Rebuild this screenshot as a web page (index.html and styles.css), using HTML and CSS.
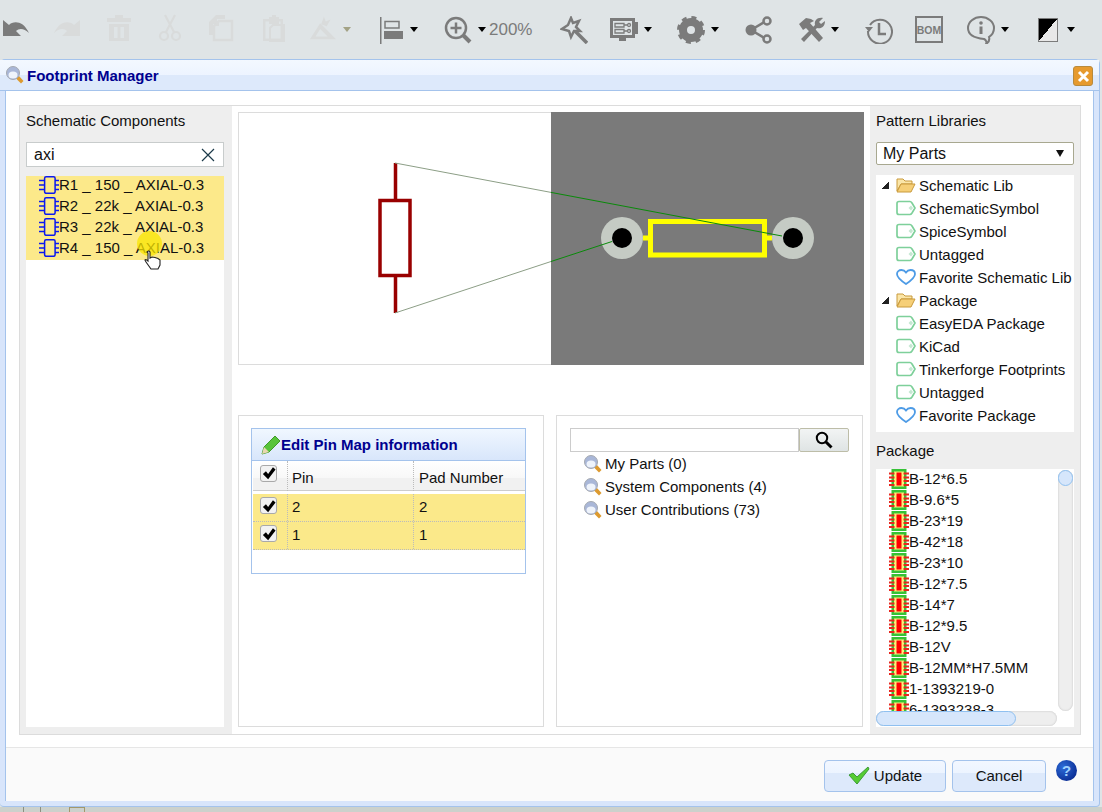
FILE: index.html
```html
<!DOCTYPE html>
<html lang="en">
<head>
    <meta charset="UTF-8">
    <title>Footprint Manager</title>
    <link rel="stylesheet" href="styles.css">
</head>
<body>
    <svg class="defs" width="0" height="0">
        <symbol id="i-undo" viewBox="0 0 28 28"><path d="M1 4L7 9C11 5 21 4 27 17C22 12 17 12 14 15L19 20H1Z"/></symbol>
        <symbol id="i-redo" viewBox="0 0 28 28"><path d="M27 4L21 9C17 5 7 4 1 17C6 12 11 12 14 15L9 20H27Z"/></symbol>
        <symbol id="i-trash" viewBox="0 0 24 28"><path fill-rule="evenodd" d="M8 1H16V4H24V8H0V4H8ZM2 10H22V27H2ZM7 13V24H10.500V13ZM13.500 13V24H17V13Z"/></symbol>
        <symbol id="i-scissors" viewBox="0 0 24 28"><g fill="none" stroke="currentColor" stroke-width="2.200"><circle cx="6" cy="22" r="4"/><circle cx="18" cy="22" r="4"/><path d="M8 18L17 1M16 18L7 1"/></g></symbol>
        <symbol id="i-copy" viewBox="0 0 26 28"><path d="M8 1H17V5H9V10H5V21H1V8Z"/><path fill="none" stroke="currentColor" stroke-width="2.500" d="M11 7H24V26H6V12Z"/><path d="M11 7V12H6Z"/></symbol>
        <symbol id="i-paste" viewBox="0 0 24 28"><path fill-rule="evenodd" d="M8 3H11V1H15V3H18V5H22V27H2V5H8ZM4.500 7.500V24.500H19.500V7.500H18V10H8V7.500Z"/><path fill="none" stroke="currentColor" stroke-width="2" d="M23 11H12L9 14V27H23Z"/></symbol>
        <symbol id="i-tri" viewBox="0 0 30 28"><path fill-rule="evenodd" d="M12 9L29 26H1ZM12 15L7 23H20Z"/><path d="M13 10L16 2L18 7L23 5L19 12Z"/></symbol>
        <symbol id="i-align" viewBox="0 0 28 28"><path d="M1 1H2.500V28H1Z"/><path fill="none" stroke="currentColor" stroke-width="1.500" d="M6 5.500H20V12H6Z"/><path d="M5 15H24V23H5Z"/></symbol>
        <symbol id="i-zoom" viewBox="0 0 28 28"><g fill="none" stroke="currentColor"><circle cx="12" cy="12" r="10" stroke-width="2.500"/><path stroke-width="2.500" d="M12 6.500V17.500M6.500 12H17.500"/><path stroke-width="4" d="M19 19L26 26"/></g></symbol>
        <symbol id="i-wand" viewBox="0 0 28 28"><path fill="none" stroke="currentColor" stroke-width="2.500" d="M11 2L13 7L19 5L16 11L20 15L14 15L11 21L9 15L2 13L8 9Z"/><path fill="none" stroke="currentColor" stroke-width="3.500" d="M15 15L27 27"/></symbol>
        <symbol id="i-board" viewBox="0 0 28 28"><path fill-rule="evenodd" d="M0 2H25V6H28V18H25V22H16V25H9V22H0ZM3 5V19H22V5Z"/><g fill="none" stroke="currentColor" stroke-width="1.300"><path d="M5 7.500H14V11H5ZM5 13.500H14V17H5Z"/><circle cx="19" cy="9" r="1.500"/><circle cx="19" cy="15" r="1.500"/><path d="M14 9H17M14 15H17"/></g></symbol>
        <symbol id="i-gear" viewBox="0 0 28 28"><circle cx="14" cy="14" r="8" fill="none" stroke="currentColor" stroke-width="8"/><circle cx="14" cy="14" r="12.500" fill="none" stroke="currentColor" stroke-width="3" stroke-dasharray="5 4.820"/></symbol>
        <symbol id="i-share" viewBox="0 0 28 28"><g fill="none" stroke="currentColor" stroke-width="2.500"><path d="M6 14L21 5M6 14L21 23"/><circle cx="22" cy="5" r="3.500" fill="#dfe4e6"/><circle cx="22" cy="23" r="3.500" fill="#dfe4e6"/></g><circle cx="6" cy="14" r="5.500"/></symbol>
        <symbol id="i-tools" viewBox="0 0 28 28"><path d="M2 8L9 2L14 3L17 5L13 7L26 22L22 26L9 12L6 14Z"/><path d="M4 23L18 9C17 5 20 1 26 2L22 6L24 8L28 5C28 11 24 13 20 12L7 26Z"/></symbol>
        <symbol id="i-history" viewBox="0 0 28 28"><g fill="none" stroke="currentColor" stroke-width="2"><path d="M5 9A12 12 0 1 1 3 15"/><path stroke-width="2.500" d="M14 7V18H21"/></g><path d="M0 11H8L4 16Z"/></symbol>
        <symbol id="i-info" viewBox="0 0 28 28"><path fill="none" stroke="currentColor" stroke-width="2" d="M14 1C7 1 1 6 1 12C1 18 7 22 17 23C19 24 20 26 19 28C22 26 23 24 22 21C25 19 27 16 27 12C27 6 21 1 14 1Z"/><circle cx="14" cy="7" r="1.800"/><path d="M12.500 10.500H15.500V18H12.500Z"/></symbol>
        <symbol id="i-lens" viewBox="0 0 18 18"><path d="M11 11L13 10L17.500 15L15 17.500L10 12.500Z" fill="#dd9a2f"/><circle cx="7" cy="7" r="6.500" fill="#a9b7d8" stroke="#a5a9b0"/><ellipse cx="7" cy="9" rx="4.500" ry="3.500" fill="#eef3fb"/></symbol>
        <symbol id="i-sch" viewBox="0 0 20 18"><g fill="none" stroke="#0b18f0" stroke-width="1.500"><rect x="5.600" y="0.800" width="10.500" height="16.500" rx="1.500"/><path d="M0 4.500H5.500M0 9H5.500M0 13.500H5.500M16 4.500H20M16 9H20M16 13.500H20"/></g></symbol>
        <symbol id="i-folder" viewBox="0 0 20 16"><path d="M1 14V2H7L9 4H16V7H5L1 14Z" fill="#fbe6a8" stroke="#c99a3c"/><path d="M1 15L5 7H19L15 15Z" fill="#f6cf77" stroke="#c99a3c"/></symbol>
        <symbol id="i-tag" viewBox="0 0 20 16"><path d="M3 1.500H14Q15 1.500 16 3L19 8L16 13Q15 14.500 14 14.500H3Q1 14.500 1 12.500V3.500Q1 1.500 3 1.500Z" fill="#fff" stroke="#7ed09a" stroke-width="1.700"/><path d="M12.500 8L15 5.500L17 8L15 10.500Z" fill="#c5e8d2"/></symbol>
        <symbol id="i-heart" viewBox="0 0 20 16"><path d="M10 15C4 11 1 8.500 1 5C1 2.500 3 1 5.500 1C7.500 1 9 2 10 3.500C11 2 12.500 1 14.500 1C17 1 19 2.500 19 5C19 8.500 16 11 10 15Z" fill="#fff" stroke="#4d9be6" stroke-width="1.800"/></symbol>
        <symbol id="i-pkg" viewBox="0 0 20 20"><rect x="2.500" y="0" width="15" height="20" fill="#36c236"/><rect x="5" y="2.500" width="10" height="15" fill="#fdf07a"/><rect x="7.500" y="3.500" width="5" height="13" fill="#f00"/><path d="M0 3.500H5.500V5.500H0ZM0 7.500H5.500V9.500H0ZM0 11H5.500V13H0ZM0 15H5.500V17H0ZM14.500 3.500H20V5.500H14.500ZM14.500 7.500H20V9.500H14.500ZM14.500 11H20V13H14.500ZM14.500 15H20V17H14.500Z" fill="#e8261c"/></symbol>
        <symbol id="i-check" viewBox="0 0 16 16"><path d="M1 9L4.500 6L7 9L12.500 1.500L15.500 4L7 15Z"/></symbol>
    </svg>

    <div class="toolbar">
        <div class="tool"><svg class="ic"><use href="#i-undo"/></svg></div>
        <div class="tool faint"><svg class="ic"><use href="#i-redo"/></svg></div>
        <div class="tool faint up"><svg class="ic"><use href="#i-trash"/></svg></div>
        <div class="tool faint up"><svg class="ic"><use href="#i-scissors"/></svg></div>
        <div class="tool faint up"><svg class="ic"><use href="#i-copy"/></svg></div>
        <div class="tool faint up"><svg class="ic"><use href="#i-paste"/></svg></div>
        <div class="tool faint up"><svg class="ic"><use href="#i-tri"/></svg><span class="caret caret-off"></span></div>
        <div class="tool tool-align"><svg class="ic"><use href="#i-align"/></svg><span class="caret"></span></div>
        <div class="tool"><svg class="ic"><use href="#i-zoom"/></svg><span class="caret"></span><span class="zoom-val">200%</span></div>
        <div class="tool"><svg class="ic"><use href="#i-wand"/></svg></div>
        <div class="tool"><svg class="ic"><use href="#i-board"/></svg><span class="caret"></span></div>
        <div class="tool"><svg class="ic"><use href="#i-gear"/></svg><span class="caret"></span></div>
        <div class="tool"><svg class="ic"><use href="#i-share"/></svg></div>
        <div class="tool"><svg class="ic"><use href="#i-tools"/></svg><span class="caret"></span></div>
        <div class="tool"><svg class="ic"><use href="#i-history"/></svg></div>
        <div class="tool"><span class="bom">BOM</span></div>
        <div class="tool"><svg class="ic"><use href="#i-info"/></svg><span class="caret"></span></div>
        <div class="tool"><span class="contrast"></span><span class="caret"></span></div>
    </div>

    <div class="dialog">
        <div class="dialog-title">
            <svg class="lens"><use href="#i-lens"/></svg>
            <span>Footprint Manager</span>
            <span class="close">
                <svg width="13" height="13" viewBox="0 0 13 13"><path d="M2 2L11 11M11 2L2 11" stroke="#fff" stroke-width="3"/></svg>
            </span>
        </div>
        <div class="dialog-body">
            <div class="panes">
                <div class="side side-left">
                    <div class="side-title">Schematic Components</div>
                    <div class="search-box">
                        <span>axi</span>
                        <svg width="14" height="14" viewBox="0 0 14 14"><path d="M1 1L13 13M13 1L1 13" stroke="#1c3a4a" stroke-width="1.200"/></svg>
                    </div>
                    <div class="comp-list">
                        <div class="comp-sel">
                            <div class="comp"><svg class="sch"><use href="#i-sch"/></svg>R1 _ 150 _ AXIAL-0.3</div>
                            <div class="comp"><svg class="sch"><use href="#i-sch"/></svg>R2 _ 22k _ AXIAL-0.3</div>
                            <div class="comp"><svg class="sch"><use href="#i-sch"/></svg>R3 _ 22k _ AXIAL-0.3</div>
                            <div class="comp"><svg class="sch"><use href="#i-sch"/></svg>R4 _ 150 _ AXIAL-0.3</div>
                        </div>
                    </div>
                </div>

                <div class="center">
                    <div class="preview">
                        <svg class="preview-art" width="626" height="253" viewBox="238 112 626 253">
                            <rect x="551" y="112" width="313" height="253" fill="#7a7a7a"/>
                            <g fill="none" stroke="#990000">
                                <rect x="380" y="200.500" width="30" height="75" stroke-width="3.500"/>
                                <path d="M395.500 163V200M395.500 276V313" stroke-width="3.500"/>
                            </g>
                            <g fill="#c5cbc4">
                                <circle cx="622" cy="238" r="21"/>
                                <circle cx="793" cy="238" r="21"/>
                            </g>
                            <circle cx="622" cy="238" r="10"/>
                            <circle cx="793" cy="238" r="10"/>
                            <path d="M650.500 221.500H764.500V255H650.500ZM643 238H650M765 238H772" fill="none" stroke="#ffff00" stroke-width="5"/>
                            <path d="M395 163L551 192.400M395 313L551 261.500" stroke="#8c9e86"/>
                            <path d="M551 192.400L782 236M551 261.500L612 241.500" stroke="#0a8a0a"/>
                        </svg>
                    </div>
                    <div class="lower">
                        <div class="lower-box">
                            <div class="pin-grid">
                                <div class="pin-title">
                                    <svg width="20" height="20" viewBox="0 0 20 20"><path d="M1 19L3 12L14 1L19 6L8 17Z" fill="#58c43a" stroke="#3f9a2a"/><path d="M1 19L3 12L8 17Z" fill="#e8d8b0"/></svg>
                                    <span>Edit Pin Map information</span>
                                </div>
                                <div class="pin-row pin-head">
                                    <div class="cell-check"><span class="check"><svg><use href="#i-check"/></svg></span></div>
                                    <div class="cell-pin">Pin</div>
                                    <div class="cell-pad">Pad Number</div>
                                </div>
                                <div class="pin-row pin-sel">
                                    <div class="cell-check"><span class="check"><svg><use href="#i-check"/></svg></span></div>
                                    <div class="cell-pin">2</div>
                                    <div class="cell-pad">2</div>
                                </div>
                                <div class="pin-row pin-sel">
                                    <div class="cell-check"><span class="check"><svg><use href="#i-check"/></svg></span></div>
                                    <div class="cell-pin">1</div>
                                    <div class="cell-pad">1</div>
                                </div>
                            </div>
                        </div>
                        <div class="lower-box lower-right">
                            <div class="find">
                                <div class="find-input"></div>
                                <div class="find-btn">
                                    <svg width="18" height="18" viewBox="0 0 18 18"><circle cx="7" cy="7" r="5.200" fill="none" stroke="#000" stroke-width="2"/><path d="M11 11L16.500 16.500" stroke="#000" stroke-width="3"/></svg>
                                </div>
                            </div>
                            <div class="src"><svg class="lens"><use href="#i-lens"/></svg>My Parts (0)</div>
                            <div class="src"><svg class="lens"><use href="#i-lens"/></svg>System Components (4)</div>
                            <div class="src"><svg class="lens"><use href="#i-lens"/></svg>User Contributions (73)</div>
                        </div>
                    </div>
                </div>

                <div class="side side-right">
                    <div class="side-title">Pattern Libraries</div>
                    <div class="select"><span>My Parts</span><span class="select-arrow"></span></div>
                    <div class="tree">
                        <div class="node"><span class="twist"></span><svg class="nic"><use href="#i-folder"/></svg>Schematic Lib</div>
                        <div class="node leaf"><svg class="nic"><use href="#i-tag"/></svg>SchematicSymbol</div>
                        <div class="node leaf"><svg class="nic"><use href="#i-tag"/></svg>SpiceSymbol</div>
                        <div class="node leaf"><svg class="nic"><use href="#i-tag"/></svg>Untagged</div>
                        <div class="node leaf"><svg class="nic"><use href="#i-heart"/></svg>Favorite Schematic Lib</div>
                        <div class="node"><span class="twist"></span><svg class="nic"><use href="#i-folder"/></svg>Package</div>
                        <div class="node leaf"><svg class="nic"><use href="#i-tag"/></svg>EasyEDA Package</div>
                        <div class="node leaf"><svg class="nic"><use href="#i-tag"/></svg>KiCad</div>
                        <div class="node leaf"><svg class="nic"><use href="#i-tag"/></svg>Tinkerforge Footprints</div>
                        <div class="node leaf"><svg class="nic"><use href="#i-tag"/></svg>Untagged</div>
                        <div class="node leaf"><svg class="nic"><use href="#i-heart"/></svg>Favorite Package</div>
                    </div>
                    <div class="side-title side-title-pkg">Package</div>
                    <div class="pkg-box">
                        <div class="pkg-list">
                            <div class="pkg"><svg class="pkg-ic"><use href="#i-pkg"/></svg>B-12*6.5</div>
                            <div class="pkg"><svg class="pkg-ic"><use href="#i-pkg"/></svg>B-9.6*5</div>
                            <div class="pkg"><svg class="pkg-ic"><use href="#i-pkg"/></svg>B-23*19</div>
                            <div class="pkg"><svg class="pkg-ic"><use href="#i-pkg"/></svg>B-42*18</div>
                            <div class="pkg"><svg class="pkg-ic"><use href="#i-pkg"/></svg>B-23*10</div>
                            <div class="pkg"><svg class="pkg-ic"><use href="#i-pkg"/></svg>B-12*7.5</div>
                            <div class="pkg"><svg class="pkg-ic"><use href="#i-pkg"/></svg>B-14*7</div>
                            <div class="pkg"><svg class="pkg-ic"><use href="#i-pkg"/></svg>B-12*9.5</div>
                            <div class="pkg"><svg class="pkg-ic"><use href="#i-pkg"/></svg>B-12V</div>
                            <div class="pkg"><svg class="pkg-ic"><use href="#i-pkg"/></svg>B-12MM*H7.5MM</div>
                            <div class="pkg"><svg class="pkg-ic"><use href="#i-pkg"/></svg>1-1393219-0</div>
                            <div class="pkg"><svg class="pkg-ic"><use href="#i-pkg"/></svg>6-1393238-3</div>
                        </div>
                        <div class="vbar"><span class="vthumb"></span></div>
                        <div class="hbar"><span class="hthumb"></span></div>
                    </div>
                </div>
            </div>
            <div class="footer">
                <div class="btn btn-update">
                    <svg width="22" height="20" viewBox="0 0 22 20"><path d="M1 10L5 8L9 12L20 2L21 4L9 19Z" fill="#55cc33" stroke="#3d9a38"/></svg>
                    Update
                </div>
                <div class="btn btn-cancel">Cancel</div>
                <span class="help">?</span>
            </div>
        </div>
    </div>
    <div class="strip"><span class="strip-tick"></span><span class="strip-tick"></span><span class="strip-tab"></span></div>

    <div class="pointer">
        <svg width="20" height="24" viewBox="0 0 20 24"><path d="M4 6Q6 4 7 6V12L9 11L12 11.500L15 12.500L17 14V19L15 23H8L3 16L2 14Q3 13 5 15V7Z" fill="#fff" stroke="#222" stroke-width="1.100"/></svg>
    </div>
</body>
</html>
```

FILE: styles.css
```css
* {
    box-sizing: border-box;
}

body {
    margin: 0;
    width: 1102px;
    height: 812px;
    overflow: hidden;
    position: relative;
    background-color: #dfe4e6;
    font-family: "Liberation Sans", Arial, sans-serif;
    font-size: 15px;
    color: #111;
}

.defs {
    position: absolute;
}

.toolbar {
    height: 59px;
    padding-left: 2px;
    display: grid;
    grid-template-columns: 51px 52px 51px 51px 52px 50px 70px 65px 116px 50px 67px 68px 52px 68px 50px 52px 71px 60px;
    align-items: center;
    color: #7b7b7b;
}

.tool {
    display: flex;
    align-items: center;
    gap: 6px;
    height: 28px;
}

.ic {
    width: 28px;
    height: 28px;
    fill: currentColor;
}

.faint {
    color: #d9dbdb;
}

.up .ic {
    margin-top: -4px;
}

.caret {
    width: 0;
    height: 0;
    border-left: 4.500px solid transparent;
    border-right: 4.500px solid transparent;
    border-top: 5px solid #000;
}

.caret-off {
    border-top-color: #a3a285;
}

.tool-align .caret {
    margin-left: -3px;
}

.zoom-val {
    margin-left: -3px;
    font-size: 17px;
    color: #7b7b7b;
}

.bom {
    width: 28px;
    height: 27px;
    border: 2px solid #7b7b7b;
    display: flex;
    align-items: center;
    justify-content: center;
    font-size: 10.500px;
    font-weight: bold;
}

.contrast {
    width: 20px;
    height: 24px;
    margin-right: 3px;
    border: 1px solid #7b7b7b;
    background: linear-gradient(to bottom right, #000 50%, #e8e8e8 50%);
}

.dialog {
    width: 1100px;
    height: 748px;
    padding: 0 5px 6px 5px;
    border: 1px solid #a4c3ec;
    border-left-width: 0;
    border-radius: 5px 5px 4px 4px;
    background: #d8e5fb;
}

.dialog-title {
    height: 31px;
    position: relative;
    display: flex;
    align-items: center;
    gap: 3px;
    margin: 0 -5px 0 -5px;
    padding-left: 6px;
    background: linear-gradient(#f3f8ff 0, #edf4ff 50%, #dde9fb 50%, #dde9fb 100%);
    border-bottom: 1px solid #a4c3ec;
    font-weight: bold;
    color: #00008f;
}

.lens {
    width: 18px;
    height: 18px;
    flex: none;
}

.close {
    position: absolute;
    right: 6px;
    top: 6px;
    width: 20px;
    height: 20px;
    border: 1px solid #b88a3c;
    border-radius: 3px;
    background: #e69a2e;
    display: flex;
    align-items: center;
    justify-content: center;
}

.dialog-body {
    height: 710px;
    padding: 14px 12px 0 13px;
    background-color: #fff;
    border-left: 1px solid #a4c3ec;
    border-right: 1px solid #a4c3ec;
    border-bottom: 1px solid #a4c3ec;
}

.panes {
    height: 630px;
    display: flex;
    border: 1px solid #dcdcdc;
    background-color: #eee;
}

.side {
    flex: none;
    padding-top: 6px;
    padding-left: 6px;
}

.side-left {
    width: 212px;
    padding-right: 8px;
}

.side-right {
    width: 210px;
    padding-right: 6px;
}

.side-title {
    height: 18px;
    line-height: 18px;
}

.search-box {
    height: 25px;
    margin-top: 12px;
    padding: 0 8px 0 7px;
    display: flex;
    align-items: center;
    justify-content: space-between;
    border: 1px solid #c8cccc;
    background-color: #fff;
    font-size: 16px;
}

.comp-list {
    height: 551px;
    margin-top: 9px;
    background-color: #fff;
}

.comp-sel {
    background-color: #fce98a;
}

.comp {
    height: 21px;
    padding: 0 0 5px 13px;
    display: flex;
    align-items: center;
}

.sch {
    width: 20px;
    height: 18px;
    flex: none;
    margin-top: 2px;
}

.center {
    flex: none;
    width: 638px;
    padding: 6px;
    background-color: #fff;
}

.preview {
    height: 253px;
    border: 1px solid #dcdcdc;
}

.preview-art {
    display: block;
    margin: -1px;
}

.lower {
    margin-top: 50px;
    height: 312px;
    display: flex;
    gap: 12px;
}

.lower-box {
    width: 306px;
    border: 1px solid #dcdcdc;
    padding: 12px;
}

.lower-right {
    width: 307px;
    padding: 12px 13px;
}

.pin-grid {
    width: 275px;
    height: 146px;
    border: 1px solid #a4c3ec;
}

.pin-title {
    height: 32px;
    padding-left: 9px;
    display: flex;
    align-items: center;
    gap: 0;
    background: linear-gradient(#f0f7ff, #d8e6fb);
    border-bottom: 1px solid #a4c3ec;
    font-weight: bold;
    color: #00008f;
}

.pin-row {
    display: grid;
    grid-template-columns: 35px 126px 1fr;
    height: 28px;
    margin-left: 1px;
    border-bottom: 1px dotted #bbb;
}

.pin-row > div {
    display: flex;
    align-items: center;
    padding-left: 5px;
    border-right: 1px dotted #bbb;
}

.pin-row > .cell-pin {
    padding-left: 4px;
}

.pin-row > .cell-check {
    padding-left: 7px;
}

.pin-row > .cell-pad {
    border-right: none;
}

.pin-sel > div {
    padding-bottom: 2px;
}

.pin-sel .check {
    margin-top: -2px;
}

.pin-head {
    height: 33px;
    border-bottom: 3px solid #fff;
    box-shadow: inset 0 -1px 0 #ccc;
    background: linear-gradient(#fff 0, #f8f8f8 55%, #f1f1f1 55%, #f1f1f1 100%);
}

.pin-head > div {
    padding-top: 3px;
}

.pin-head .check {
    margin-top: -9px;
}

.pin-sel {
    background-color: #fbe98a;
}

.check {
    width: 17px;
    height: 17px;
    display: flex;
    align-items: center;
    justify-content: center;
    border: 1px solid #a9a9a9;
    border-radius: 3px;
    background-color: #f2f2f2;
}

.check svg {
    width: 14px;
    height: 14px;
}

.find {
    display: flex;
    height: 24px;
}

.find-input {
    width: 229px;
    border: 1px solid #ccc;
}

.find-btn {
    width: 50px;
    display: flex;
    align-items: center;
    justify-content: center;
    border: 1px solid #bdbda8;
    border-radius: 2px;
    background: linear-gradient(#f2f4f4, #dfe4e4);
}

.src {
    height: 23px;
    padding-left: 14px;
    display: flex;
    align-items: center;
    gap: 3px;
}

.select {
    height: 23px;
    margin-top: 12px;
    padding: 0 6px;
    display: flex;
    align-items: center;
    justify-content: space-between;
    border: 1px solid #a8a890;
    border-radius: 2px;
    background-color: #fff;
    font-size: 16px;
}

.select-arrow {
    width: 0;
    height: 0;
    margin-right: 3px;
    border-left: 4px solid transparent;
    border-right: 4px solid transparent;
    border-top: 7px solid #111;
}

.tree {
    height: 257px;
    margin-top: 10px;
    background-color: #fff;
}

.node {
    height: 23px;
    padding: 0 0 3px 5px;
    display: flex;
    align-items: center;
    white-space: nowrap;
}

.leaf {
    padding-left: 20px;
}

.twist {
    width: 8px;
    height: 7px;
    margin-right: 7px;
    flex: none;
    background: linear-gradient(to bottom right, transparent 50%, #222 50%);
}

.nic {
    width: 20px;
    height: 16px;
    margin-right: 3px;
    flex: none;
}

.side-title-pkg {
    margin: 10px 0 9px;
}

.pkg-box {
    position: relative;
    height: 258px;
    background-color: #fff;
    overflow: hidden;
}

.pkg-list {
    height: 243px;
    overflow: hidden;
}

.pkg {
    height: 21px;
    padding: 0 0 2px 13px;
    display: flex;
    align-items: center;
}

.pkg-ic {
    width: 20px;
    height: 20px;
    flex: none;
}

.vbar {
    position: absolute;
    top: 1px;
    right: 1px;
    width: 15px;
    height: 241px;
    border-radius: 8px;
    background-color: #eee;
    box-shadow: inset 0 0 2px #bbb;
}

.vthumb {
    display: block;
    height: 16px;
    border: 1px solid #8fc0f0;
    border-radius: 8px;
    background-color: #d6e6fb;
}

.hbar {
    position: absolute;
    left: 0;
    bottom: 1px;
    width: 181px;
    height: 15px;
    border-radius: 8px;
    background-color: #eee;
    box-shadow: inset 0 0 2px #bbb;
}

.hthumb {
    display: block;
    width: 140px;
    height: 15px;
    border: 1px solid #8fc0f0;
    border-radius: 8px;
    background-color: #d6e6fb;
}

.footer {
    height: 54px;
    margin: 12px -12px 0 -13px;
    padding: 12px 16px 0 0;
    display: flex;
    align-items: flex-start;
    justify-content: flex-end;
    border-top: 1px solid #e6e6e6;
    background-color: #fafafa;
}

.btn {
    height: 32px;
    padding-bottom: 2px;
    display: flex;
    align-items: center;
    justify-content: center;
    gap: 4px;
    border: 1px solid #a4c3ec;
    border-radius: 4px;
    background: linear-gradient(#f2f7ff 0, #ecf4ff 40%, #dde9fb 40%, #dde9fb 100%);
}

.btn-update {
    width: 122px;
}

.btn-cancel {
    width: 94px;
    margin-left: 6px;
}

.help {
    width: 21px;
    height: 21px;
    margin-left: 10px;
    display: flex;
    align-items: center;
    justify-content: center;
    border-radius: 50%;
    background: radial-gradient(circle at 35% 35%, #2d6cd8, #001a80);
    color: #9fd0ff;
    font-weight: bold;
    font-size: 15px;
}

.strip {
    height: 5px;
    padding-left: 23px;
    display: flex;
    background-color: #ccd1cc;
}

.strip-tick {
    width: 17px;
    border-left: 1px solid #8b8f80;
}

.strip-tab {
    width: 16px;
    margin-left: 12px;
    border: 1px solid #a3986c;
    border-bottom: none;
}

.pointer {
    position: absolute;
    left: 137px;
    top: 231px;
    width: 25px;
    height: 25px;
    border-radius: 50%;
    background-color: rgba(250, 230, 0, 0.75);
}

.pointer svg {
    position: absolute;
    left: 6px;
    top: 15px;
}
```
